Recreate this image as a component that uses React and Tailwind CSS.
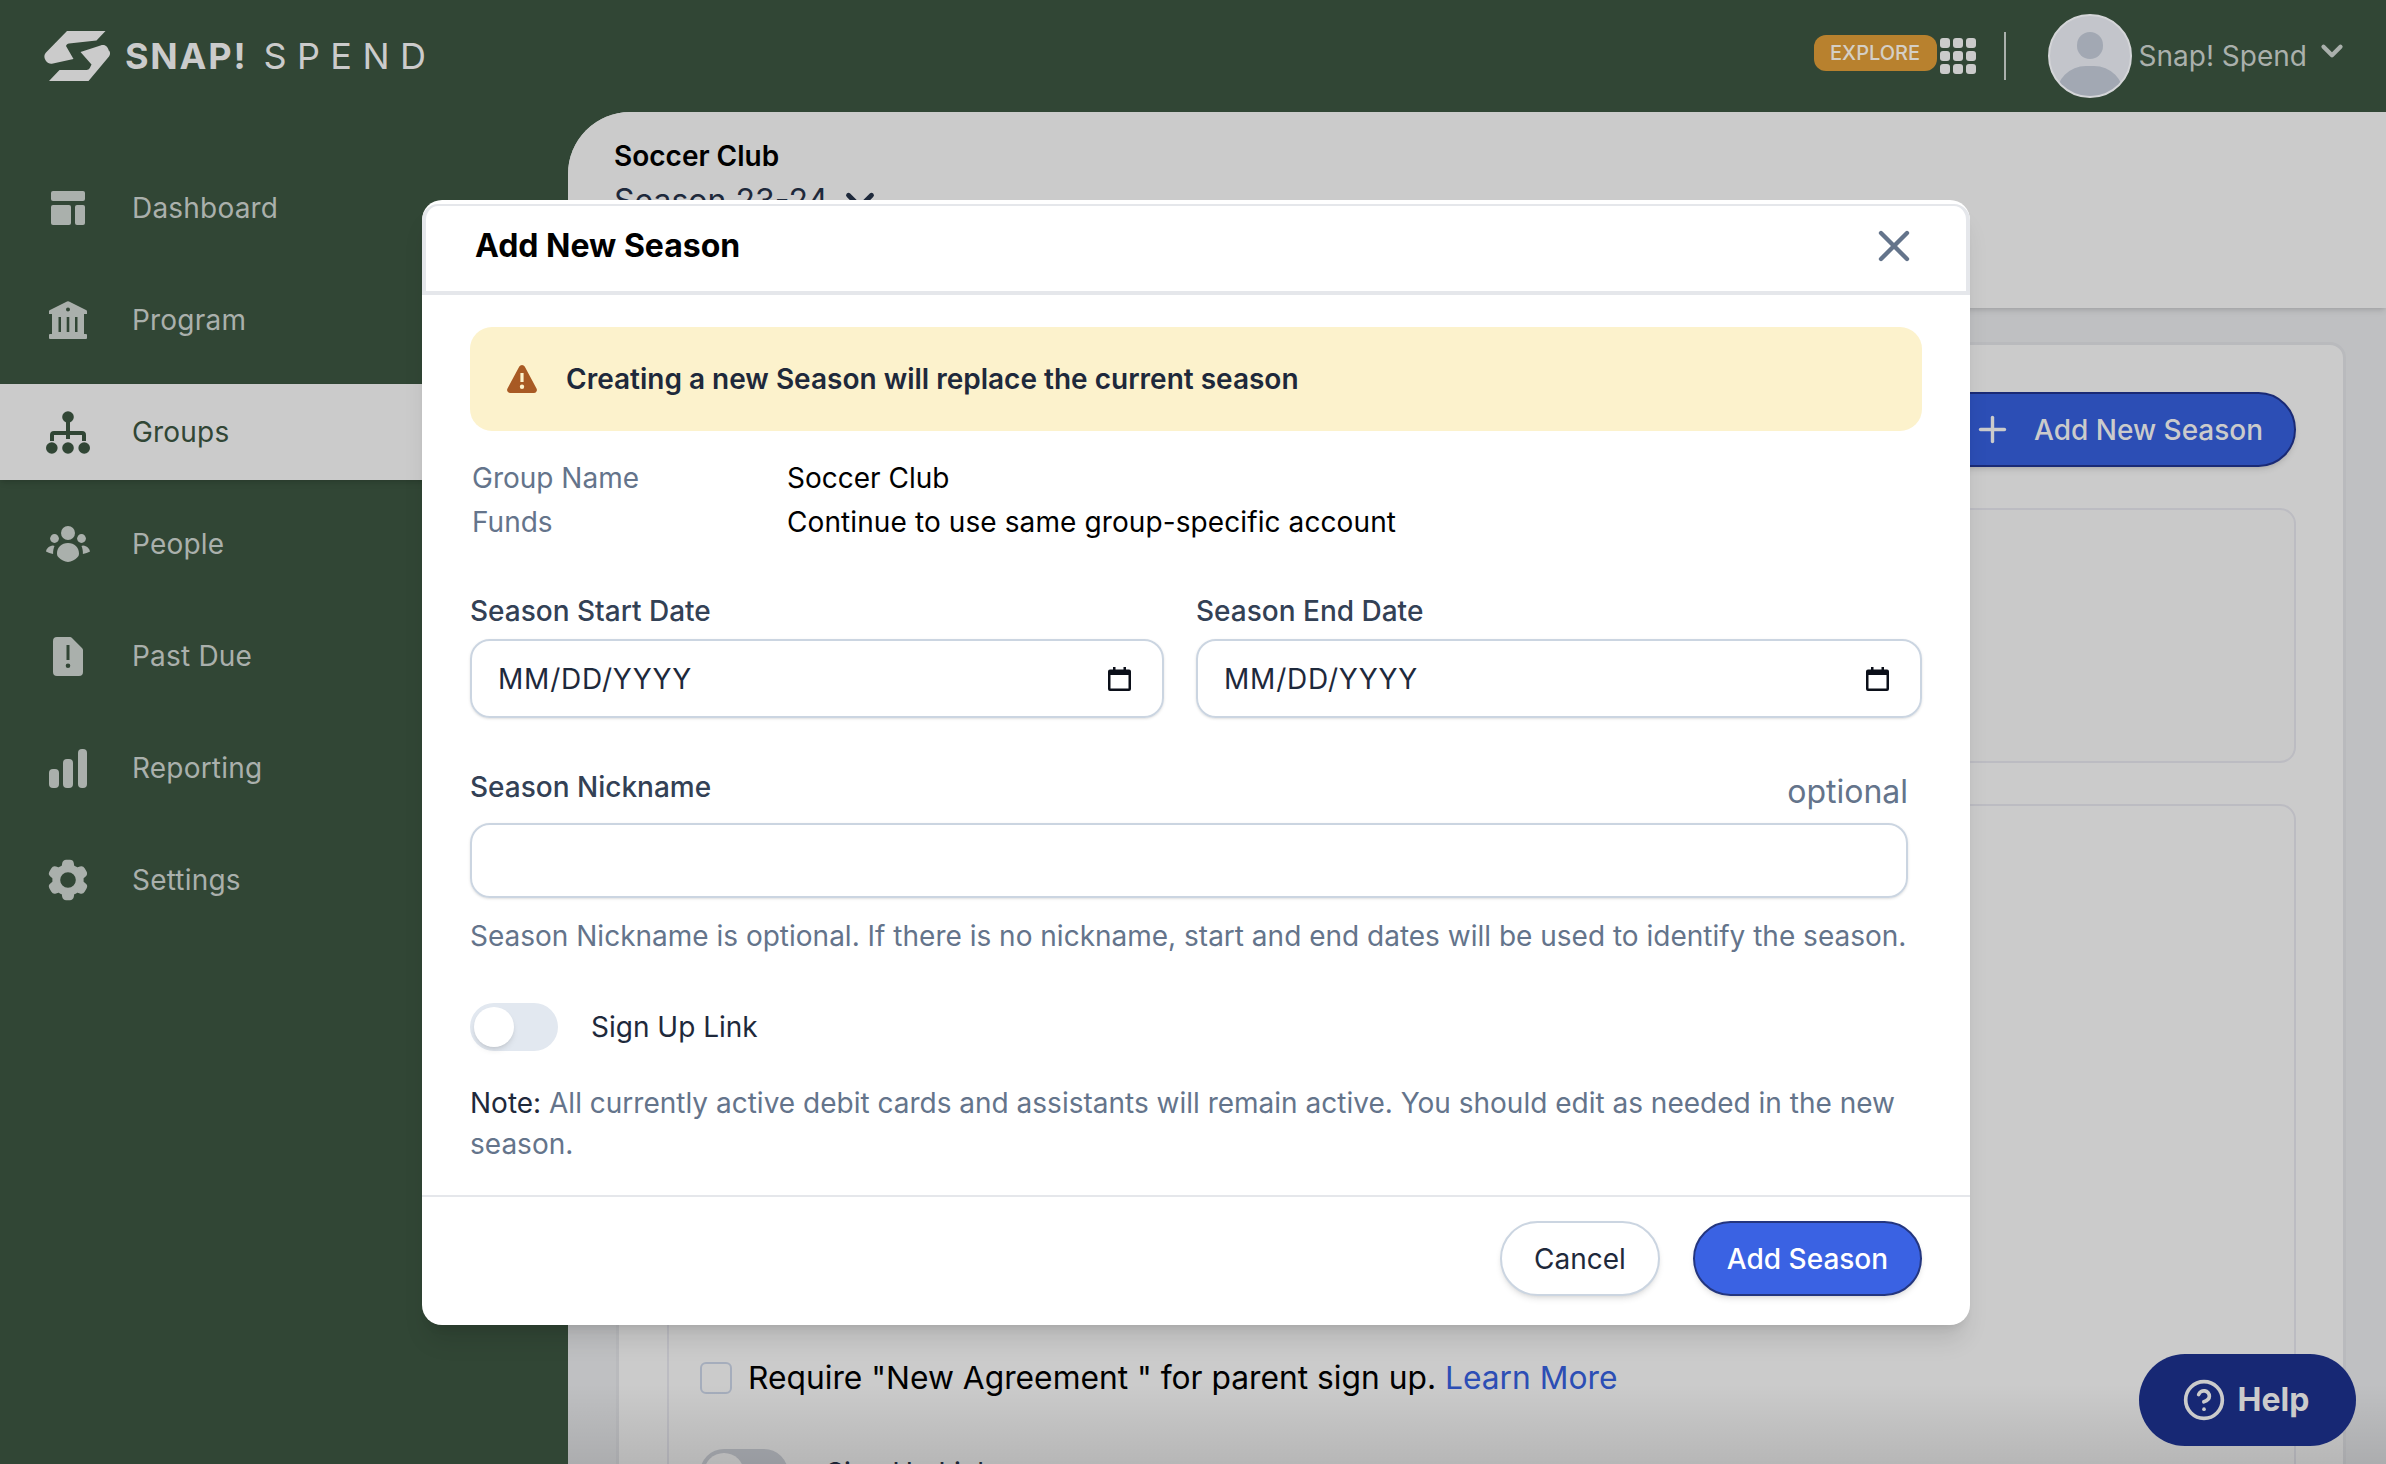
import { ChevronDown, X, Plus, CircleHelp } from 'lucide-react';
import { HiCog6Tooth } from 'react-icons/hi2';

// Sidebar icons, drawn to the picture's proportions
const DashboardIcon = () => (
  <svg viewBox="0 0 34 34" className="w-[34px] h-[34px]" fill="currentColor">
    <rect x="0" y="0" width="34" height="10" rx="2" />
    <rect x="0" y="14" width="20" height="20" rx="2" />
    <rect x="24" y="14" width="10" height="20" rx="2" />
  </svg>
);

const ProgramIcon = () => (
  <svg viewBox="0 0 38 38" className="w-[38px] h-[38px]" fill="currentColor">
    <path
      fillRule="evenodd"
      d="M18 .5a2 2 0 0 1 2 0l17 8.5a1.5 1.5 0 0 1 1 1.4V13H35v20h2a1 1 0 0 1 1 1v3a1 1 0 0 1-1 1H1a1 1 0 0 1-1-1v-3a1 1 0 0 1 1-1h2V13H0v-2.6A1.5 1.5 0 0 1 1 9ZM19 6.5a2 2 0 1 0 0 4 2 2 0 0 0 0-4ZM9.5 16v15h2.5V16ZM17.7 16v15h2.6V16ZM26 16v15h2.5V16Z"
    />
  </svg>
);

const GroupsIcon = () => (
  <svg viewBox="0 0 44 43" className="w-[44px] h-[43px]" fill="currentColor">
    <circle cx="22" cy="6" r="5.8" />
    <circle cx="5.8" cy="37" r="5.8" />
    <circle cx="22" cy="37" r="5.8" />
    <circle cx="38.2" cy="37" r="5.8" />
    <path d="M22 10v18M6 30v-6a2 2 0 0 1 2-2h28a2 2 0 0 1 2 2v6" fill="none" stroke="currentColor" strokeWidth="4" />
  </svg>
);

const PeopleIcon = () => (
  <svg viewBox="0 0 44 36" className="w-[44px] h-[36px]" fill="currentColor">
    <circle cx="22" cy="7" r="7" />
    <circle cx="8.5" cy="12.5" r="4.4" />
    <circle cx="35.5" cy="12.5" r="4.4" />
    <path d="M22 17c6.5 0 11 4.5 11 10.5 0 2-.6 3-2 4.3C29 33.8 25.5 36 22 36s-7-2.200-9-4.200c-1.400-1.300-2-2.300-2-4.300C11 21.500 15.500 17 22 17Z" />
    <path d="M7 19.500 8.500 20c-1 2.500-1.500 4.500-1.400 8C4.500 27.500 2 26.500 0 25.500c.5-3 3-5.500 7-6Z" />
    <path d="M37 19.500 35.500 20c1 2.500 1.500 4.500 1.400 8 2.600-.5 5.100-1.500 7.100-2.500-.5-3-3-5.500-7-6Z" />
  </svg>
);

const PastDueIcon = () => (
  <svg viewBox="0 0 30 39" className="w-[30px] h-[39px]" fill="currentColor">
    <path
      fillRule="evenodd"
      d="M4 0h13a3 3 0 0 1 2 .9L29 11a3 3 0 0 1 1 2v22a4 4 0 0 1-4 4H4a4 4 0 0 1-4-4V4a4 4 0 0 1 4-4ZM13.500 8v15h3V8ZM15 26.500a2.300 2.300 0 1 0 0 4.600 2.300 2.300 0 0 0 0-4.600Z"
    />
  </svg>
);

const ReportingIcon = () => (
  <svg viewBox="0 0 38 39" className="w-[38px] h-[39px]" fill="currentColor">
    <rect x="0" y="20" width="10" height="19" rx="4" />
    <rect x="14" y="10" width="10" height="29" rx="4" />
    <rect x="29" y="0" width="9" height="39" rx="4" />
  </svg>
);

const Logo = () => (
  <svg viewBox="0 0 66 50" className="w-[66px] h-[50px] shrink-0" fill="#cbcbcb">
    <path d="M23 0h38.500L52.500 9.500 25 12.500c-1.500.2-2.500 1-3 2.500l7.500 13-20.500 4.500c-3 .6-5 0-7-2.500-2-3-2.300-5.500 0-8.500Z" />
    <path d="M65 19.500c1.500 2 1.300 4 0 6L44.500 50H5l10.500-11h27c1.500 0 2.600-.8 3.300-2l1.700-3.500-11-12.500 20-6.500c3.500-1 6.500-.5 8.500 5.500Z" />
  </svg>
);

const CalendarIcon = () => (
  <svg viewBox="0 0 23 24" className="w-[23px] h-[24px]" fill="#0b0f19">
    <path
      fillRule="evenodd"
      d="M5 0h2.500v2.500h8V0H18v2.500h3a2 2 0 0 1 2 2V22a2 2 0 0 1-2 2H2a2 2 0 0 1-2-2V4.500a2 2 0 0 1 2-2h3ZM2.500 8v13.500h18V8Z"
    />
  </svg>
);

const WarningIcon = () => (
  <svg viewBox="0 0 30 28" className="w-[30px] h-[28px]" fill="#a85a24">
    <path
      fillRule="evenodd"
      d="M12.300 1.600a3.100 3.100 0 0 1 5.400 0l11.800 21.800a3.100 3.100 0 0 1-2.700 4.600H3.200a3.100 3.100 0 0 1-2.700-4.600ZM13.400 8v9h3.200V8ZM15 19.500a2.200 2.200 0 1 0 0 4.400 2.200 2.200 0 0 0 0-4.400Z"
    />
  </svg>
);

const Avatar = () => (
  <div className="relative w-[84px] h-[84px] rounded-full bg-[#c3c5cb] border-2 border-[#d4d5d8] overflow-hidden">
    <div className="absolute left-[27px] top-[16px] w-[26px] h-[27px] rounded-full bg-[#a2a8b3]" />
    <div className="absolute left-[6px] top-[50px] w-[68px] h-[60px] rounded-full bg-[#a2a8b3]" />
  </div>
);

const navItems = [
  { label: 'Dashboard', icon: <DashboardIcon /> },
  { label: 'Program', icon: <ProgramIcon /> },
  { label: 'Groups', icon: <GroupsIcon />, active: true },
  { label: 'People', icon: <PeopleIcon /> },
  { label: 'Past Due', icon: <PastDueIcon /> },
  { label: 'Reporting', icon: <ReportingIcon /> },
  { label: 'Settings', icon: <HiCog6Tooth className="w-[50px] h-[50px]" /> },
];

const NavItem = ({ label, icon, active }) => (
  <div
    className={`flex items-center h-[96px] mb-[16px] ${
      active ? 'bg-[#cbcbcb] text-[#314635] shadow-md' : 'text-[#aab0ac]'
    }`}
  >
    <div className="w-[136px] flex items-center justify-center">{icon}</div>
    <span className="text-[28px] tracking-[0.2px] -ml-[4px]">{label}</span>
  </div>
);

const DateField = ({ label }) => (
  <div>
    <div className="text-[28px] leading-[40px] font-medium text-[#334155] mb-[8px]">{label}</div>
    <div className="h-[79px] rounded-[20px] border-2 border-[#cbd5e1] shadow-sm flex items-center justify-between pl-[26px] pr-[31px]">
      <span className="text-[28px] tracking-[0.8px] text-[#1e293b]">MM/DD/YYYY</span>
      <CalendarIcon />
    </div>
  </div>
);

const AddSeasonModal = () => (
  <div className="absolute left-[422px] top-[200px] w-[1548px] h-[1125px] bg-white rounded-[20px] shadow-xl overflow-hidden flex flex-col">
    <div className="mt-[4px] h-[91px] shrink-0 border-x-4 border-t-2 border-b-4 border-[#e5e7eb] rounded-t-[16px] flex items-center justify-between pl-[49px] pr-[46px] pb-[6px]">
      <span className="text-[32px] font-bold text-black">Add New Season</span>
      <X className="w-[52px] h-[52px] text-[#64748b]" strokeWidth={2} />
    </div>

    <div className="flex-1 px-[48px] pt-[32px]">
      <div className="h-[104px] rounded-[22px] bg-[#fcf2cc] flex items-center pl-[37px] gap-[29px]">
        <WarningIcon />
        <span className="text-[28px] font-semibold text-[#1e293b]">
          Creating a new Season will replace the current season
        </span>
      </div>

      <div className="mt-[25px] pl-[2px] grid grid-cols-[315px_1fr] text-[28px] leading-[44px]">
        <span className="text-[#64748b]">Group Name</span>
        <span className="text-black">Soccer Club</span>
        <span className="text-[#64748b]">Funds</span>
        <span className="text-black tracking-[0.1px]">Continue to use same group-specific account</span>
      </div>

      <div className="mt-[47px] grid grid-cols-[694px_726px] gap-x-[32px]">
        <DateField label="Season Start Date" />
        <DateField label="Season End Date" />
      </div>

      <div className="mr-[14px]">
        <div className="mt-[49px] flex items-end justify-between h-[48px]">
          <span className="text-[28px] leading-[40px] font-medium text-[#334155] mb-[8px]">Season Nickname</span>
          <span className="text-[32px] leading-[40px] text-[#64748b] mb-[3px]">optional</span>
        </div>
        <div className="mt-[8px] h-[75px] rounded-[20px] border-2 border-[#cbd5e1] shadow-sm" />
        <p className="mt-[18px] text-[28px] leading-[40px] text-[#64748b] whitespace-nowrap">
          Season Nickname is optional. If there is no nickname, start and end dates will be used to identify the season.
        </p>
      </div>

      <div className="mt-[47px] flex items-center gap-[33px]">
        <div className="w-[88px] h-[48px] rounded-full bg-[#e2e8f0] flex items-center pl-[4px]">
          <div className="w-[40px] h-[40px] rounded-full bg-white shadow-md" />
        </div>
        <span className="text-[28px] text-[#1e293b]">Sign Up Link</span>
      </div>

      <p className="mt-[32px] text-[28px] leading-[41px] text-[#64748b]">
        <span className="text-[#1e293b]">Note:</span> All currently active debit cards and assistants will remain
        active. You should edit as needed in the new season.
      </p>
    </div>

    <div className="h-[130px] shrink-0 border-t-2 border-[#e5e7eb] flex justify-end gap-[33px] pt-[24px] pr-[48px]">
      <button className="w-[160px] h-[75px] rounded-full border-2 border-[#cbd5e1] bg-white shadow-md text-[28px] text-[#1e293b]">
        Cancel
      </button>
      <button className="w-[229px] h-[75px] rounded-full border-2 border-[#24367f] bg-[#3a62e3] shadow-md text-[28px] font-medium text-white">
        Add Season
      </button>
    </div>
  </div>
);

export default function App() {
  return (
    <div className="relative w-[2386px] h-[1464px] overflow-hidden bg-[#314635] font-['Inter',sans-serif] flex flex-col">
      <header className="h-[112px] shrink-0 flex items-center pl-[44px]">
        <Logo />
        <div className="ml-[15px] flex items-baseline text-[#cbcbcb] text-[36px] leading-none">
          <span className="font-bold tracking-[0.05em]">SNAP!</span>
          <span className="ml-[16px] font-normal tracking-[0.29em]">SPEND</span>
        </div>
        <div className="ml-auto flex items-center pr-[37px]">
          <span className="w-[123px] h-[36px] rounded-[12px] bg-[#b8812e] text-[#d4cfc6] text-[20px] font-medium flex items-center justify-center -mt-[7px]">
            EXPLORE
          </span>
          <div className="ml-[3px] grid grid-cols-3 gap-[3px]">
            {Array.from({ length: 9 }).map((_, i) => (
              <div key={i} className="w-[10px] h-[10px] rounded-[3px] bg-[#cbcbcb]" />
            ))}
          </div>
          <div className="ml-[28px] w-[2px] h-[48px] bg-[#aab0ac]" />
          <div className="ml-[42px]">
            <Avatar />
          </div>
          <span className="ml-[7px] text-[28px] text-[#aab0ac]">Snap! Spend</span>
          <ChevronDown className="ml-[8px] -mt-[10px] w-[34px] h-[34px] text-[#aab0ac]" strokeWidth={3} />
        </div>
      </header>

      <div className="flex flex-1 min-h-0">
        <nav className="w-[568px] shrink-0 pt-[48px]">
          {navItems.map((item) => (
            <NavItem key={item.label} {...item} />
          ))}
        </nav>

        <main className="flex-1 min-w-0 rounded-tl-[62px] bg-[#bfc0c2] overflow-hidden flex flex-col">
          <div className="h-[196px] shrink-0 bg-[#cbcbcb] shadow-md pl-[46px] pt-[29px]">
            <div className="text-[28px] leading-[30px] font-semibold text-black">Soccer Club</div>
            <div className="mt-[10px] h-[40px] flex items-center gap-[9px] text-[32px] leading-[40px] text-[#1e293b]">
              Season 23-24
              <ChevronDown className="w-[46px] h-[46px]" strokeWidth={2.5} />
            </div>
          </div>

          <div className="flex-1 min-h-0 pl-[48px] pr-[40px] pt-[34px]">
            <div className="h-[1200px] bg-[#cbcbcb] border-[3px] border-[#b9babd] rounded-t-[16px] pl-[48px] pr-[47px] pt-[47px]">
              <div className="flex justify-end">
                <button className="h-[75px] w-[460px] rounded-full bg-[#2c4eb5] border-2 border-[#1a2a75] shadow-md text-[#cbcbcb] text-[28px] font-medium flex items-center pl-[134px] gap-[21px]">
                  <Plus className="w-[41px] h-[41px]" strokeWidth={2} />
                  Add New Season
                </button>
              </div>
              <div className="mt-[41px] h-[255px] rounded-[16px] border-2 border-[#bcbcc2] bg-[#c9c9c9]" />
              <div className="mt-[41px] h-[800px] rounded-t-[16px] border-2 border-[#bcbcc2] pl-[31px] pt-[552px]">
                <div className="flex items-center gap-[16px] text-[31.75px] leading-[40px] text-black">
                  <div className="w-[32px] h-[32px] rounded-[6px] border-2 border-[#a5adbc]" />
                  <span>
                    Require "New Agreement " for parent sign up.{' '}
                    <span className="text-[#2c4eb5]">Learn More</span>
                  </span>
                </div>
                <div className="mt-[51px] flex items-center gap-[38px]">
                  <div className="w-[88px] h-[48px] rounded-full bg-[#a9acb2] flex items-center pl-[4px]">
                    <div className="w-[40px] h-[40px] rounded-full bg-[#cbcbcb]" />
                  </div>
                  <span className="text-[28px] text-[#1e293b]">Sign Up Link</span>
                </div>
              </div>
            </div>
          </div>
        </main>
      </div>

      {/* sombra inferior del area principal */}
      <div className="absolute left-[568px] right-0 bottom-0 h-[80px] bg-gradient-to-b from-transparent to-black/10" />

      <AddSeasonModal />

      <button className="absolute left-[2139px] top-[1354px] w-[217px] h-[92px] rounded-full bg-[#172874] text-[#cbcbcb] text-[32px] font-bold flex items-center justify-center gap-[12px] pr-[4px]">
        <CircleHelp className="w-[44px] h-[44px]" strokeWidth={2} />
        Help
      </button>
    </div>
  );
}
